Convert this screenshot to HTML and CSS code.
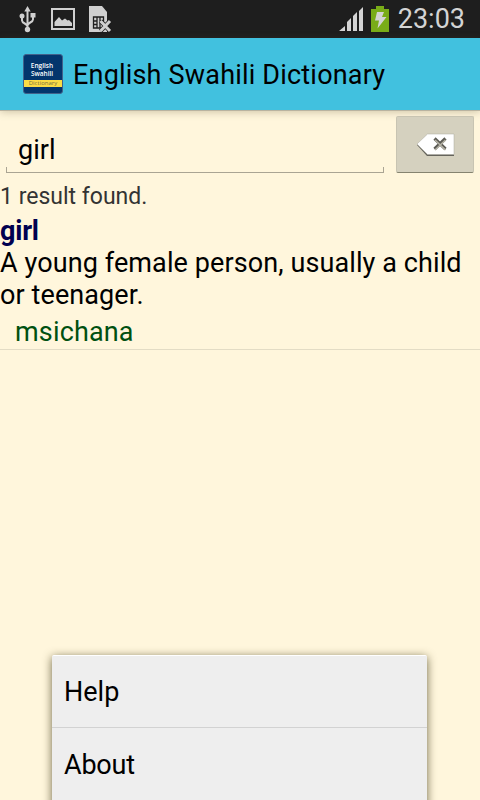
FILE: index.html
```html
<!DOCTYPE html>
<html lang="en">
<head>
    <meta charset="UTF-8">
    <meta name="viewport" content="width=device-width, initial-scale=1.0">
    <title>English Swahili Dictionary</title>
    <link rel="stylesheet" href="styles.css">
</head>
<body>
    <div class="status-bar">
        <svg class="usb" width="18" height="28" viewBox="0 0 18 28">
            <path d="M8.500 4v20M3 10v4.500c0 3 5.500 3 5.500 6M14 9v4.500c0 3-5.500 3-5.500 6" fill="none" stroke="#d0d0d0" stroke-width="2"/>
            <path d="M8.500 0l3.200 5.500H5.300zM11.500 7h5v4.500h-5z" fill="#d0d0d0"/>
            <circle cx="3" cy="10" r="2.500" fill="#d0d0d0"/>
            <circle cx="8.500" cy="23.500" r="2.700" fill="#d0d0d0"/>
        </svg>
        <svg class="image" width="24" height="22" viewBox="0 0 24 22">
            <path d="M1 1h22v20H1z" fill="none" stroke="#d0d0d0" stroke-width="2"/>
            <path d="M3.500 18v-4l4.500-5 3 3.500 3-2 2.500 2 1.500-.5 3 3V18z" fill="#d0d0d0"/>
        </svg>
        <svg class="sim" width="23" height="27" viewBox="0 0 23 27">
            <path d="M0 0h13l5 6v20H0z" fill="#d0d0d0"/>
            <path d="M4.500 11h10v11h-10zM8 11v11M11 11v11M4.500 15H8M4.500 18.500H8M11 15h3.500" fill="none" stroke="#1e1e1e" stroke-width="1.300"/>
            <path d="M11.500 15l9.500 10M21 15L11.500 25" stroke="#1e1e1e" stroke-width="4.500"/>
            <path d="M11.500 15l9.500 10M21 15L11.500 25" stroke="#d0d0d0" stroke-width="3"/>
        </svg>
        <div class="status-right">
            <svg class="signal" width="24" height="24" viewBox="0 0 24 24">
                <path d="M0 24l6-5v5zM8 24v-9l4-4v13zM14 24V9l4-4v19zM20 24V4l4-4v24z" fill="#d4d4d4"/>
            </svg>
            <svg class="battery" width="18" height="26" viewBox="0 0 18 26">
                <path d="M5 0h8v3h5v23H0V3h5z" fill="#79ac18"/>
                <path d="M6 6h7l-2 5h4.500L6.500 22.500l1.500-8H4z" fill="#d4d4d4"/>
            </svg>
            <span class="clock">23:03</span>
        </div>
    </div>

    <div class="action-bar">
        <div class="logo">
            <div class="logo-name">English<br>Swahili</div>
            <div class="logo-band">Dictionary</div>
        </div>
        <h1>English Swahili Dictionary</h1>
    </div>

    <div class="search">
        <div class="field">
            <input type="text" value="girl">
        </div>
        <button class="clear">
            <svg width="40" height="25" viewBox="0 0 40 25">
                <path d="M2 13L12 3h27v21H12z" fill="#65645c"/>
                <path d="M2 12L12.500 2H39v20.500H12.500z" fill="#fff" stroke="#aaa89e" stroke-width=".5"/>
                <path d="M19.500 6.500l11 10.500M30.500 6.500L19.500 17" stroke="#5c5b54" stroke-width="3.200"/>
                <path d="M20 8l10.500 10M30.500 8L20 18" stroke="#b5b2a5" stroke-width="1.600"/>
            </svg>
        </button>
    </div>

    <div class="results">
        <p class="count">1 result found.</p>
        <p class="word">girl</p>
        <p class="definition">A young female person, usually a child or teenager.</p>
        <p class="translation">msichana</p>
    </div>

    <div class="menu">
        <div class="menu-item">Help</div>
        <div class="menu-item">About</div>
    </div>
</body>
</html>
```
FILE: styles.css
```css
* {
    box-sizing: border-box;
}

body {
    display: flex;
    flex-direction: column;
    height: 100vh;
    margin: 0;
    background-color: #fff6dc;
    color: #000;
    font-family: Roboto, sans-serif;
    font-size: 27px;
    line-height: 32px;
    overflow: hidden;
}

p {
    margin: 0;
}

.status-bar {
    display: flex;
    align-items: flex-start;
    flex-shrink: 0;
    height: 38px;
    padding: 6px 15px 0 19px;
    background-color: #1e1e1e;
}

.image {
    margin: 2px 0 0 14px;
}

.sim {
    margin-left: 14px;
}

.status-right {
    display: flex;
    margin-left: auto;
}

.signal {
    margin-top: 1px;
}

.battery {
    margin: 0 9px 0 8px;
}

.clock {
    margin-top: -3px;
    color: #d4d4d4;
    font-size: 27px;
}

.action-bar {
    display: flex;
    align-items: center;
    flex-shrink: 0;
    height: 72px;
    padding-left: 23px;
    background-color: #41c1df;
    box-shadow: 0 1px 0 #b9b3a0, 0 2px 8px rgba(90, 80, 50, 0.3);
}

.action-bar h1 {
    margin: 1px 0 0 10px;
    font-size: 27px;
    font-weight: normal;
    letter-spacing: 0.19px;
    white-space: nowrap;
}

.logo {
    width: 40px;
    height: 40px;
    padding-top: 7px;
    border: 1px solid #42618a;
    border-radius: 3px;
    background-color: #03356c;
    font-family: "Open Sans", sans-serif;
    text-align: center;
    overflow: hidden;
}

.logo-name {
    height: 18px;
    margin-right: 2px;
    color: #fff;
    font-size: 6.5px;
    font-weight: 600;
    line-height: 8px;
}

.logo-band {
    height: 7px;
    background-color: #fbdc45;
    color: #77703f;
    font-size: 6px;
    line-height: 6px;
}

.search {
    display: flex;
    flex-shrink: 0;
    height: 70px;
    padding: 6px 6px 7px;
}

.field {
    width: 378px;
    height: 57px;
    margin-right: 12px;
    border: solid #aaa493;
    border-width: 0 1px 1px;
    border-image: linear-gradient(transparent 51px, #aaa493 51px) 1;
}

.field input {
    width: 100%;
    height: 56px;
    padding: 12px 11px 0;
    border: 0;
    outline: 0;
    background: none;
    color: #000;
    font: 27px Roboto, sans-serif;
}

.clear {
    display: flex;
    align-items: center;
    justify-content: center;
    width: 78px;
    height: 57px;
    padding: 0;
    border: 1px solid #c8c4b2;
    border-bottom: 1px solid #85836f;
    border-radius: 2px;
    background-color: #d5d1bf;
}

.results {
    padding-top: 1px;
    border-bottom: 1px solid #e3dcc5;
}

.count {
    height: 34px;
    color: #333;
    font-size: 23px;
}

.word {
    color: #000050;
    font-weight: bold;
    letter-spacing: -0.2px;
}

.definition {
    letter-spacing: 0.1px;
}

.translation {
    height: 38px;
    padding: 5px 0 0 15px;
    color: #005010;
    letter-spacing: 0.15px;
}

.menu {
    position: absolute;
    top: 655px;
    left: 52px;
    width: 375px;
    height: 160px;
    border-top: 1px solid #fff;
    border-radius: 2px;
    background-color: #eee;
    box-shadow: 0 2px 10px rgba(60, 55, 20, 0.75);
}

.menu-item {
    height: 72px;
    padding: 20px 12px;
    border-bottom: 1px solid #d2d2d2;
}

.menu-item:last-child {
    padding-top: 21px;
    border-bottom: 0;
    letter-spacing: -0.2px;
}
```
